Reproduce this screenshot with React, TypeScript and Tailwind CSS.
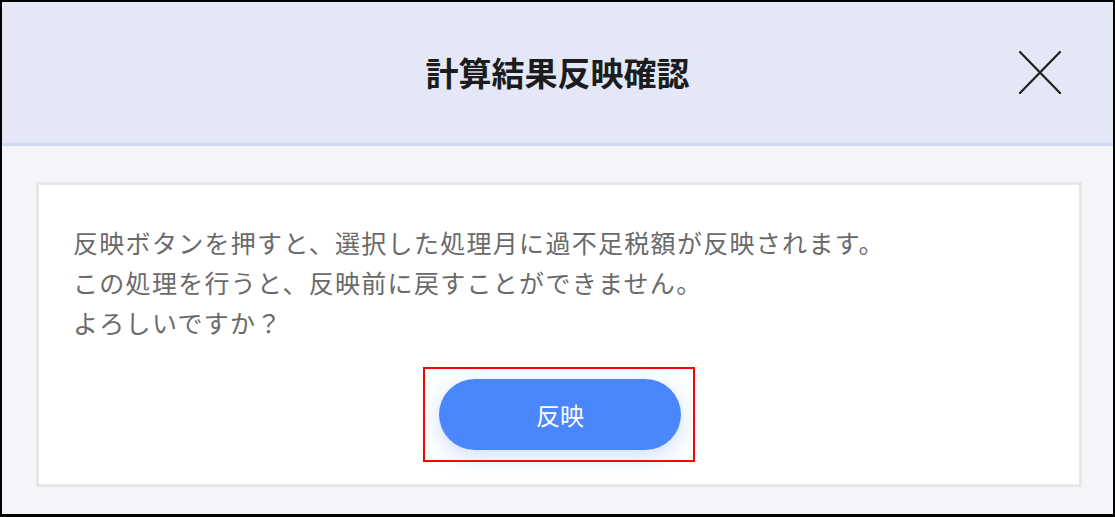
export default function App() {
  const lines = [
    "反映ボタンを押すと、選択した処理月に過不足税額が反映されます。",
    "この処理を行うと、反映前に戻すことができません。",
    "よろしいですか？",
  ];

  return (
    <div
      className="w-[1115px] h-[517px] flex flex-col border-2 border-b-[3px] border-black"
      style={{ fontFamily: '"Noto Sans CJK JP", "Noto Sans", sans-serif' }}
    >
      {/* header */}
      <div className="h-[144px] shrink-0 grid grid-cols-[1fr_auto_1fr] items-center bg-[#e4e8f6] border-b-[3px] border-[#d3d9f1]">
        <div />
        <h1 className="text-[33px] font-bold text-[#1c1c1c] leading-none">
          計算結果反映確認
        </h1>
        <div className="flex justify-end pr-[52px]">
          <button className="w-[42px] h-[43px] flex items-center justify-center">
            <svg width="42" height="43" viewBox="0 0 42 43">
              <path
                d="M1 1 L41 42 M41 1 L1 42"
                stroke="#1f1f1f"
                strokeWidth="2.2"
                strokeLinecap="round"
              />
            </svg>
          </button>
        </div>
      </div>

      {/* body */}
      <div className="flex-1 bg-[#f4f5f9] pl-[34px] pr-[31px] pt-[36px] pb-[27px]">
        <div className="h-full bg-white border-[3px] border-[#e7e7e9] px-[34px] pt-[37px] pb-[22px] flex flex-col">
          <div className="text-[25px] leading-[40px] tracking-[1.3px] text-[#6a6a6a]">
            {lines.map((line, i) => (
              <p key={i}>{line}</p>
            ))}
          </div>
          <div className="mt-[25px] flex justify-center">
            <div className="border-2 border-[#ff0000] pl-[14px] pr-[12px] py-[10px]">
              <button className="w-[242px] h-[71px] rounded-full bg-[#4a86fc] text-white text-[24px] font-normal shadow-[0_6px_22px_rgba(74,134,252,0.28)]">
                反映
              </button>
            </div>
          </div>
        </div>
      </div>
    </div>
  );
}
